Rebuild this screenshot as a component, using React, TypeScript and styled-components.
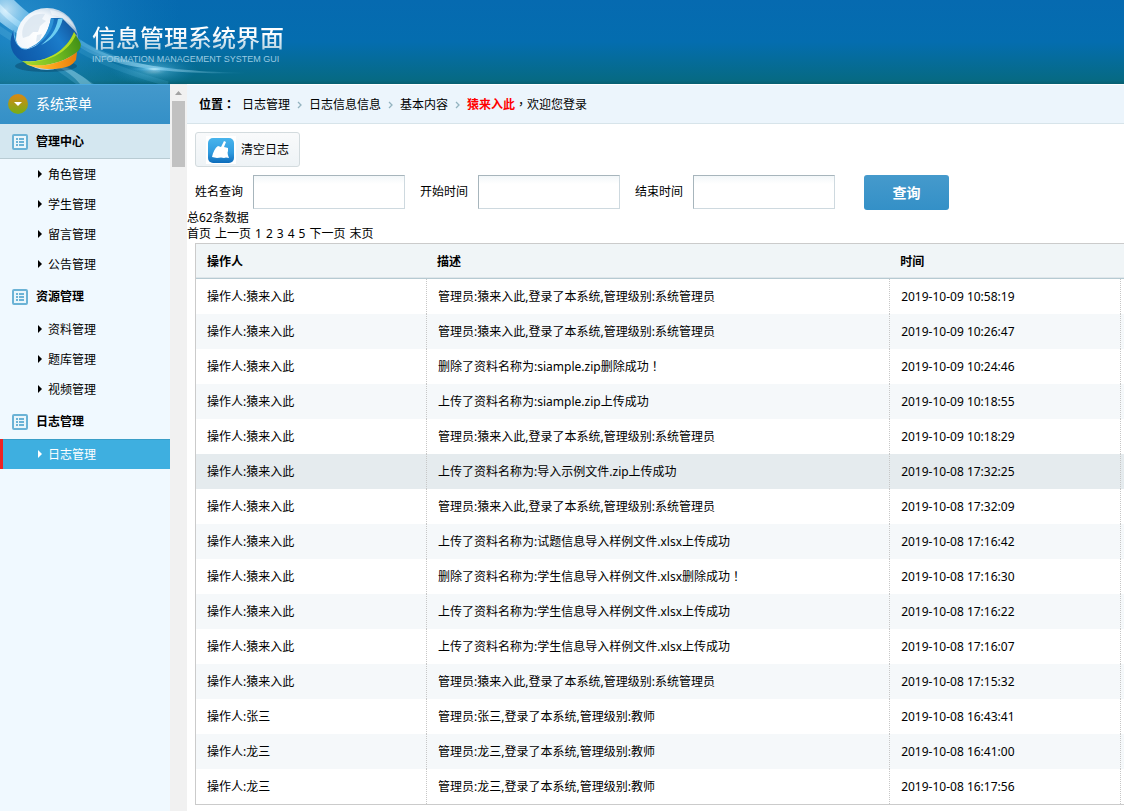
import React from "react";
import styled, { createGlobalStyle, css } from "styled-components";

const GlobalStyle = createGlobalStyle`
  * { box-sizing: border-box; }
  body {
    margin: 0;
    background: #fff;
    color: #000;
    font: 12px/16px "Noto Sans", "Noto Sans CJK SC", sans-serif;
  }
  a { color: inherit; text-decoration: none; }
  ul { margin: 0; padding: 0; list-style: none; }
  button, input { font: inherit; }
`;

const Page = styled.div`
  display: flex;
  flex-direction: column;
  min-height: 100vh;
`;

const Header = styled.header`
  height: 84px;
  display: grid;
  overflow: hidden;
  background: linear-gradient(#066ab0 0%, #046daf 50%, #056c9c 70%, #066a84 95%, #075f70 100%);
`;

const HeaderArt = styled.svg`
  grid-area: 1 / 1;
  display: block;
`;

const Brand = styled.div`
  grid-area: 1 / 1;
  z-index: 1;
  padding: 22px 0 0 92px;
`;

const BrandTitle = styled.h1`
  margin: 0;
  font-size: 24px;
  line-height: 32px;
  font-weight: 500;
  width: max-content;
  background: linear-gradient(#fff 35%, #b5d3e3 85%);
  background-clip: text;
  color: transparent;
`;

const BrandSub = styled.p`
  margin: 0;
  font-family: "Liberation Sans", sans-serif;
  font-size: 9px;
  line-height: 10px;
  color: #9acbe3;
  text-transform: uppercase;
`;

const Body = styled.div`
  flex: 1;
  display: flex;
`;

const Sidebar = styled.nav`
  flex: 0 0 170px;
  background: #f0f9ff;
`;

const MenuTitle = styled.h2`
  display: flex;
  align-items: center;
  gap: 8px;
  height: 40px;
  margin: 0;
  padding-left: 8px;
  background: linear-gradient(#4499cc, #3490c7);
  box-shadow: inset 0 1px #4caae0;
  color: #fff;
  font-size: 14px;
  font-weight: 400;
`;

const GroupTitle = styled.h3<{ $open?: boolean }>`
  display: flex;
  align-items: center;
  gap: 8px;
  height: 35px;
  margin: 0;
  padding-left: 12px;
  font-size: 12px;
  font-weight: 700;
  ${(p) =>
    p.$open &&
    css`
      background: #d4e7f0;
      box-shadow: inset 0 -1px #b8cbd3;
    `}
`;

const MenuLink = styled.a<{ $active?: boolean }>`
  display: flex;
  align-items: center;
  gap: 5px;
  height: 30px;
  padding: 2px 0 0 35px;
  border-left: 3px solid transparent;
  ${(p) =>
    p.$active &&
    css`
      background: #3eafe0;
      border-left-color: #ee2223;
      box-shadow: inset 0 1px #3a9fc8;
      color: #fff;
    `}
`;

const ScrollTrack = styled.div`
  flex: 0 0 17px;
  display: flex;
  flex-direction: column;
  align-items: center;
  background: #f1f1f1;
`;

const ScrollArrow = styled.svg`
  display: block;
  width: 17px;
  height: 17px;
`;

const ScrollThumb = styled.div`
  width: 13px;
  height: 66px;
  background: #c1c1c1;
`;

const Main = styled.main`
  flex: 1;
  min-width: 0;
`;

const Crumbs = styled.nav`
  display: flex;
  align-items: center;
  height: 40px;
  padding: 2px 0 0 12px;
  border-bottom: 1px solid #d7e4ea;
  background: #ecf5fc;
  box-shadow: inset 0 1px #fff;
`;

const CrumbLabel = styled.b`
  margin-right: 7px;
`;

const CrumbArrow = styled.svg`
  width: 19px;
  height: 8px;
`;

const UserName = styled.b`
  color: #f00;
`;

/* Full-width punctuation set in the middle of its square. */
const Mark = styled.span`
  font-family: "Noto Sans CJK TC", sans-serif;
  line-height: 1;
`;

const ToolButton = styled.button`
  display: flex;
  align-items: center;
  gap: 5px;
  height: 35px;
  margin: 8px 0 0 8px;
  padding: 0 10px;
  border: 1px solid #d3dbde;
  border-radius: 3px;
  background: linear-gradient(#f9fafb, #eef3f6);
  color: #000;
`;

const SearchForm = styled.form`
  display: flex;
  height: 35px;
  margin: 8px 0 0 8px;
`;

const Field = styled.label`
  display: flex;
  align-items: center;
  gap: 10px;
  height: 34px;
  margin-right: 15px;
`;

const TextInput = styled.input<{ $wide?: boolean }>`
  width: ${(p) => (p.$wide ? 152 : 142)}px;
  height: 34px;
  padding: 0 10px;
  border: 1px solid;
  border-color: #a7b5bc #ced9df #ced9df #a7b5bc;
  background: linear-gradient(#f3f7f9, #fff 8px);
`;

const SearchButton = styled.button`
  width: 85px;
  height: 35px;
  margin-left: 14px;
  border: 0;
  border-radius: 3px;
  background: linear-gradient(#459acc, #3490c7);
  color: #fff;
  font-size: 14px;
  font-weight: 700;
`;

const Pager = styled.nav`
  display: flex;
  gap: 4px;
  margin-bottom: 1px;
`;

const LogTable = styled.table`
  width: calc(100% - 8px);
  margin-left: 8px;
  border: solid #cbcbcb;
  border-width: 1px 0 1px 1px;
  border-spacing: 0;
  table-layout: fixed;
`;

const Column = styled.col<{ $width?: string }>`
  width: ${(p) => p.$width ?? "auto"};
`;

const HeadCell = styled.th`
  height: 35px;
  padding: 2px 10px 0;
  text-align: left;
  background: #f0f5f7;
  border-bottom: 1px solid #b6cad2;
  box-shadow: inset 0 -1px #dfe6ea;
  &:first-child { padding-left: 11px; }
`;

const LogRow = styled.tr<{ $hover?: boolean }>`
  background: #fff;
  &:nth-child(even) { background: #f5f8fa; }
  ${(p) => p.$hover && css`&&:nth-child(n) { background: #e5ebee; }`}
`;

const Cell = styled.td`
  height: 35px;
  padding: 0 11px;
  border-right: 1px dotted #c7c7c7;
  white-space: nowrap;
`;

const EndCell = styled.td`
  padding: 0;
`;

const groups = [
  { title: "管理中心", open: true, items: ["角色管理", "学生管理", "留言管理", "公告管理"] },
  { title: "资源管理", items: ["资料管理", "题库管理", "视频管理"] },
  { title: "日志管理", items: ["日志管理"], active: "日志管理" },
];

const login = (who: string, level: string) => `管理员:${who},登录了本系统,管理级别:${level}`;
const me = "猿来入此";
const logs: [string, React.ReactNode, string][] = [
  [me, login(me, "系统管理员"), "2019-10-09 10:58:19"],
  [me, login(me, "系统管理员"), "2019-10-09 10:26:47"],
  [me, <>删除了资料名称为:siample.zip删除成功<Mark>！</Mark></>, "2019-10-09 10:24:46"],
  [me, "上传了资料名称为:siample.zip上传成功", "2019-10-09 10:18:55"],
  [me, login(me, "系统管理员"), "2019-10-09 10:18:29"],
  [me, "上传了资料名称为:导入示例文件.zip上传成功", "2019-10-08 17:32:25"],
  [me, login(me, "系统管理员"), "2019-10-08 17:32:09"],
  [me, "上传了资料名称为:试题信息导入样例文件.xlsx上传成功", "2019-10-08 17:16:42"],
  [me, <>删除了资料名称为:学生信息导入样例文件.xlsx删除成功<Mark>！</Mark></>, "2019-10-08 17:16:30"],
  [me, "上传了资料名称为:学生信息导入样例文件.xlsx上传成功", "2019-10-08 17:16:22"],
  [me, "上传了资料名称为:学生信息导入样例文件.xlsx上传成功", "2019-10-08 17:16:07"],
  [me, login(me, "系统管理员"), "2019-10-08 17:15:32"],
  ["张三", login("张三", "教师"), "2019-10-08 16:43:41"],
  ["龙三", login("龙三", "教师"), "2019-10-08 16:41:00"],
  ["龙三", login("龙三", "教师"), "2019-10-08 16:17:56"],
];

function Art() {
  return (
    <HeaderArt width="400" height="84" viewBox="0 0 400 84" aria-hidden="true">
      <defs>
        <radialGradient id="corner" gradientUnits="userSpaceOnUse" cx="6" cy="10" r="70">
          <stop offset="0" stopColor="#e4f6ff" stopOpacity="0.8" />
          <stop offset="0.4" stopColor="#7fcdf6" stopOpacity="0.55" />
          <stop offset="1" stopColor="#1b86c6" stopOpacity="0" />
        </radialGradient>
        <radialGradient id="haze" gradientUnits="userSpaceOnUse" cx="20" cy="20" r="160">
          <stop offset="0" stopColor="#3fa6df" stopOpacity="0.55" />
          <stop offset="1" stopColor="#1b86c6" stopOpacity="0" />
        </radialGradient>
        <radialGradient id="flare">
          <stop offset="0" stopColor="#e8fbff" />
          <stop offset="0.3" stopColor="#6cc9ee" stopOpacity="0.6" />
          <stop offset="1" stopColor="#1b86c6" stopOpacity="0" />
        </radialGradient>
        <linearGradient id="trail">
          <stop offset="0" stopColor="#7fd0f5" stopOpacity="0.35" />
          <stop offset="0.45" stopColor="#d5f4ff" stopOpacity="0.8" />
          <stop offset="1" stopColor="#4cb3d8" stopOpacity="0" />
        </linearGradient>
        <radialGradient id="glass" cx="0.36" cy="0.45" r="0.66">
          <stop offset="0" stopColor="#fff" />
          <stop offset="0.55" stopColor="#f1f6fb" />
          <stop offset="0.85" stopColor="#b3cbe0" />
          <stop offset="1" stopColor="#6d9fc8" />
        </radialGradient>
        <linearGradient id="blue" gradientUnits="userSpaceOnUse" x1="16" y1="62" x2="74" y2="24">
          <stop offset="0" stopColor="#0d56a6" />
          <stop offset="0.35" stopColor="#1266b6" />
          <stop offset="0.7" stopColor="#1b7cca" />
          <stop offset="1" stopColor="#12549c" />
        </linearGradient>
        <linearGradient id="green" gradientUnits="userSpaceOnUse" x1="26" y1="62" x2="80" y2="42">
          <stop offset="0" stopColor="#a8d82a" />
          <stop offset="0.55" stopColor="#6fba22" />
          <stop offset="1" stopColor="#429016" />
        </linearGradient>
        <linearGradient id="orange">
          <stop offset="0" stopColor="#ffd34a" />
          <stop offset="0.5" stopColor="#fba61e" />
          <stop offset="1" stopColor="#e97c0a" />
        </linearGradient>
      </defs>
      <rect width="200" height="84" fill="url(#haze)" />
      <path d="M0 0H14C30 16 54 32 90 46L110 58C60 50 24 42 0 22Z" fill="url(#corner)" />
      <path d="M0 4C20 26 50 42 110 60L108 62C50 48 16 30 0 12Z" fill="url(#corner)" />
      <path d="M0 26C26 44 62 62 94 84H76C52 66 22 48 0 34Z" fill="#6cc0e2" opacity="0.25" />
      <path d="M62 66C74 70 84 77 92 84H80C74 77 68 72 60 68Z" fill="#a6dff0" opacity="0.4" />
      <path d="M78 38C108 60 150 71 250 73C160 75 108 66 78 46Z" fill="url(#trail)" opacity="0.8" />
      <path d="M80 50C104 64 132 74 168 84" fill="none" stroke="#5bb7dc" strokeWidth="5" opacity="0.2" />
      <path d="M80 42C104 56 132 64 160 70" fill="none" stroke="#7bd0f2" strokeWidth="4" opacity="0.2" />
      <ellipse cx="154" cy="70" rx="44" ry="16" fill="url(#flare)" opacity="0.6" />
      <ellipse cx="154" cy="69" rx="26" ry="3" fill="url(#flare)" />
      <ellipse cx="46" cy="66" rx="31" ry="6" fill="#04304f" opacity="0.35" />
      <circle cx="47" cy="39" r="31" fill="url(#glass)" />
      <path d="M50 10C62 11 73 19 76 30C70 22 62 16 52 15Z" fill="#fff" opacity="0.45" />
      <path d="M28 20c4-5 10-7 17-6l-3 5 4 2-6 5-2 6-5 0-4 4-6 2c-2-6 0-13 5-18ZM37 35l5-1-2 6-4 2Z" fill="#d3e0ec" opacity="0.65" />
      <path d="M14 30C14 42 19 50 27 49C40 47 48 35 51 18L62 18L74 30L77 34C71 50 48 64 22 61C8 53 9 38 14 30Z" fill="url(#blue)" />
      <path d="M14 31C14 42 19 50 27 49" fill="none" stroke="#62b9ee" strokeWidth="1" />
      <path d="M51 18L54 19C52 33 42 45 27 49C41 43 48 34 51 18Z" fill="#2f93d6" />
      <path d="M58 19L63 18C60 31 52 40 41 45C51 37 56 30 58 19Z" fill="#6dcdf2" />
      <path d="M22 61C44 64 66 52 74 32L80 42C82 45 80 50 77 52C66 61 46 68 28 65Z" fill="url(#green)" />
      <path d="M22 61C44 64 66 52 74 32L76 35C67 54 46 64 22 61Z" fill="#c5e92a" opacity="0.8" />
      <path d="M26 64C44 68 63 63 77 52L76 60C74 62 74 63 71 65C62 70 40 71 26 64Z" fill="url(#orange)" />
    </HeaderArt>
  );
}

const ListIcon = () => (
  <svg width="16" height="16" viewBox="0 0 16 16" aria-hidden="true">
    <rect x="1" y="1" width="14" height="14" rx="1" fill="#eaf6fb" stroke="#6bb3d6" strokeWidth="2" />
    <path d="M4 5h2M7 5h5M4 8h2M7 8h5M4 11h2M7 11h5" stroke="#6bb3d6" strokeWidth="2" />
  </svg>
);

const ItemArrow = () => (
  <svg width="5" height="10" viewBox="0 0 5 10" aria-hidden="true">
    <path d="M0 0L4 4L0 8Z" fill="currentColor" />
  </svg>
);

const Chevron = () => (
  <CrumbArrow viewBox="0 0 19 8" aria-hidden="true">
    <path d="M8 1L11 4L8 7" fill="none" stroke="#93b3c0" strokeWidth="1.3" />
  </CrumbArrow>
);

export default function App() {
  return (
    <Page>
      <GlobalStyle />
      <Header>
        <Art />
        <Brand>
          <BrandTitle>信息管理系统界面</BrandTitle>
          <BrandSub>Information Management System GUI</BrandSub>
        </Brand>
      </Header>
      <Body>
        <Sidebar>
          <MenuTitle>
            <svg width="20" height="20" viewBox="0 0 20 20" aria-hidden="true">
              <defs>
                <linearGradient id="dot" x2="0" y2="1">
                  <stop offset="0.1" stopColor="#d18a14" />
                  <stop offset="0.9" stopColor="#7dab16" />
                </linearGradient>
              </defs>
              <circle cx="10" cy="10" r="10" fill="url(#dot)" />
              <path d="M6 8H14L10 12Z" fill="#fff" />
            </svg>
            系统菜单
          </MenuTitle>
          {groups.map((g) => (
            <section key={g.title}>
              <GroupTitle $open={g.open}>
                <ListIcon />
                {g.title}
              </GroupTitle>
              <ul>
                {g.items.map((item) => (
                  <li key={item}>
                    <MenuLink href="#" $active={item === g.active}>
                      <ItemArrow />
                      {item}
                    </MenuLink>
                  </li>
                ))}
              </ul>
            </section>
          ))}
        </Sidebar>
        <ScrollTrack aria-hidden="true">
          <ScrollArrow viewBox="0 0 17 17">
            <path d="M5 11L8.5 7L12 11Z" fill="#a3a3a3" />
          </ScrollArrow>
          <ScrollThumb />
        </ScrollTrack>
        <Main>
          <Crumbs>
            <CrumbLabel>位置<Mark>：</Mark></CrumbLabel>
            <a href="#">日志管理</a>
            <Chevron />
            <a href="#">日志信息信息</a>
            <Chevron />
            <a href="#">基本内容</a>
            <Chevron />
            <UserName>猿来入此</UserName>
            <span><Mark>，</Mark>欢迎您登录</span>
          </Crumbs>
          <ToolButton type="button">
            <svg width="30" height="28" viewBox="0 0 30 28" aria-hidden="true">
              <defs>
                <linearGradient id="clean" x2="0" y2="1">
                  <stop offset="0" stopColor="#48b4ec" />
                  <stop offset="0.6" stopColor="#2f9ade" />
                  <stop offset="1" stopColor="#0d6cbb" />
                </linearGradient>
              </defs>
              <rect width="30" height="28" fill="#fff" />
              <rect x="2" y="2" width="26" height="25" rx="5" fill="url(#clean)" />
              <path d="M6 21C7 16 9 12 12 10L15 11L18 5L20 6L18 11L22 12L22 15C21 17 22 19 23 22L20 21.500L18 22L15 21.500L11 22Z" fill="#fff" />
            </svg>
            清空日志
          </ToolButton>
          <SearchForm onSubmit={(e) => e.preventDefault()}>
            <Field>姓名查询<TextInput $wide type="text" /></Field>
            <Field>开始时间<TextInput type="text" /></Field>
            <Field>结束时间<TextInput type="text" /></Field>
            <SearchButton type="submit">查询</SearchButton>
          </SearchForm>
          <div>总62条数据</div>
          <Pager>
            {["首页", "上一页", "1", "2", "3", "4", "5", "下一页", "末页"].map((p) => (
              <a key={p} href="#">{p}</a>
            ))}
          </Pager>
          <LogTable>
            <colgroup>
              <Column $width="24.9%" />
              <Column $width="49.9%" />
              <Column />
              <Column $width="3px" />
            </colgroup>
            <thead>
              <tr>
                <HeadCell>操作人</HeadCell>
                <HeadCell>描述</HeadCell>
                <HeadCell colSpan={2}>时间</HeadCell>
              </tr>
            </thead>
            <tbody>
              {logs.map(([who, what, when], i) => (
                <LogRow key={i} $hover={i === 5}>
                  <Cell>操作人:{who}</Cell>
                  <Cell>{what}</Cell>
                  <Cell>{when}</Cell>
                  <EndCell />
                </LogRow>
              ))}
            </tbody>
          </LogTable>
        </Main>
      </Body>
    </Page>
  );
}
